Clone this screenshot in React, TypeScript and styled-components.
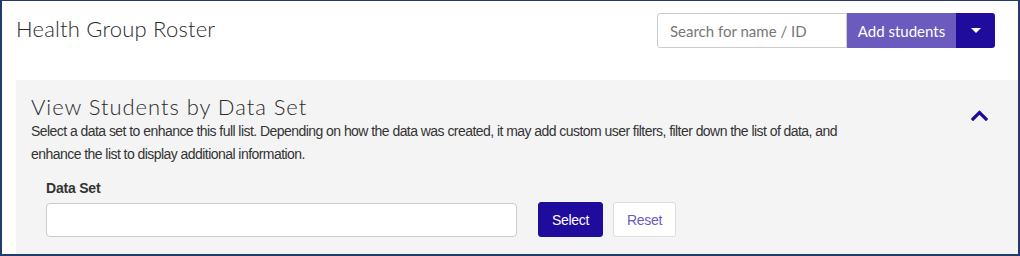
import React from "react";
import styled, { createGlobalStyle } from "styled-components";

const Global = createGlobalStyle`
  * { box-sizing: border-box; }
  html, body { margin: 0; padding: 0; background: #fff; }
`;

const Frame = styled.div`
  width: 1020px;
  height: 256px;
  border-style: solid;
  border-color: #213b6c;
  border-width: 1px 2px 2px 2px;
  background: #fff;
  display: flex;
  flex-direction: column;
  overflow: hidden;
  font-family: "Lato", "Open Sans", sans-serif;
  color: #333;
`;

const Header = styled.div`
  height: 79px;
  display: flex;
  justify-content: space-between;
  align-items: flex-start;
  padding: 0 23px 0 14px;
`;

const Title = styled.h1`
  margin: 15px 0 0;
  font-size: 22px;
  font-weight: 300;
  line-height: 26px;
  color: #2b2b2b;
  letter-spacing: 0.2px;
`;

const Actions = styled.div`
  display: flex;
  align-items: stretch;
  margin-top: 12px;
  height: 35px;
`;

const Search = styled.input`
  width: 190px;
  height: 35px;
  border: 1px solid #ccc;
  border-radius: 3px 0 0 3px;
  padding: 0 12px;
  font-family: "Lato", sans-serif;
  font-size: 15px;
  color: #333;
  outline: none;
  &::placeholder { color: #777; }
`;

const AddButton = styled.button`
  height: 35px;
  width: 109px;
  border: none;
  background: #6b5bbf;
  color: #fff;
  font-family: "Lato", sans-serif;
  font-size: 15px;
  padding: 0;
`;

const Caret = styled.button`
  height: 35px;
  width: 39px;
  border: none;
  background: #1f0b9c;
  border-radius: 0 3px 3px 0;
  display: flex;
  align-items: center;
  justify-content: center;
  padding: 0;
  &::after {
    content: "";
    border-left: 5px solid transparent;
    border-right: 5px solid transparent;
    border-top: 5px solid #fff;
  }
`;

const Panel = styled.section`
  flex: 1;
  margin-left: 14px;
  background: #f4f4f4;
  padding: 14px 0 0 15px;
  display: flex;
  flex-direction: column;
`;

const PanelTop = styled.div`
  display: flex;
  justify-content: space-between;
  align-items: flex-start;
`;

const PanelText = styled.div`
  width: 840px;
`;

const PanelTitle = styled.h2`
  margin: 0;
  font-size: 22px;
  font-weight: 300;
  line-height: 26px;
  letter-spacing: 0.95px;
  color: #2b2b2b;
`;

const Description = styled.p`
  margin: 0;
  font-family: "Liberation Sans", Arial, sans-serif;
  font-size: 14px;
  letter-spacing: -0.55px;
  line-height: 23px;
  color: #333;
`;

const Toggle = styled.button`
  border: none;
  background: transparent;
  padding: 0;
  margin: 14px 30px 0 0;
  width: 18px;
  height: 14px;
  display: flex;
  align-items: center;
  justify-content: center;
`;

const Field = styled.div`
  margin: 12px 0 0 15px;
  display: flex;
  flex-direction: column;
`;

const Label = styled.label`
  font-family: "Liberation Sans", Arial, sans-serif;
  font-size: 14px;
  font-weight: 700;
  letter-spacing: -0.2px;
  color: #333;
  line-height: 20px;
  margin-bottom: 4px;
`;

const Row = styled.div`
  display: flex;
  align-items: center;
`;

const DataInput = styled.input`
  width: 471px;
  height: 34px;
  border: 1px solid #ccc;
  border-radius: 4px;
  background: #fff;
  outline: none;
`;

const Btn = styled.button<{ $primary?: boolean }>`
  height: 35px;
  border-radius: 3px;
  font-family: "Liberation Sans", Arial, sans-serif;
  font-size: 14px;
  letter-spacing: -0.3px;
  padding: 0;
  margin-left: ${(p) => (p.$primary ? "21px" : "10px")};
  width: ${(p) => (p.$primary ? "65px" : "63px")};
  background: ${(p) => (p.$primary ? "#1f0b9c" : "#fff")};
  color: ${(p) => (p.$primary ? "#fff" : "#6b5bbf")};
  border: 1px solid ${(p) => (p.$primary ? "#1f0b9c" : "#ddd")};
`;

export default function App() {
  return (
    <>
      <Global />
      <Frame>
        <Header>
          <Title>Health Group Roster</Title>
          <Actions>
            <Search placeholder="Search for name / ID" />
            <AddButton>Add students</AddButton>
            <Caret aria-label="More" />
          </Actions>
        </Header>
        <Panel>
          <PanelTop>
            <PanelText>
              <PanelTitle>View Students by Data Set</PanelTitle>
              <Description>
                Select a data set to enhance this full list. Depending on how the data was created, it may add custom user filters, filter down the list of data, and enhance the list to display additional information.
              </Description>
            </PanelText>
            <Toggle aria-label="Collapse">
              <svg width="17" height="11" viewBox="0 0 17 11">
                <path d="M2 9 L8.5 2.5 L15 9" fill="none" stroke="#1f0b9c" strokeWidth="3.2" strokeLinecap="square" />
              </svg>
            </Toggle>
          </PanelTop>
          <Field>
            <Label>Data Set</Label>
            <Row>
              <DataInput />
              <Btn $primary>Select</Btn>
              <Btn>Reset</Btn>
            </Row>
          </Field>
        </Panel>
      </Frame>
    </>
  );
}
